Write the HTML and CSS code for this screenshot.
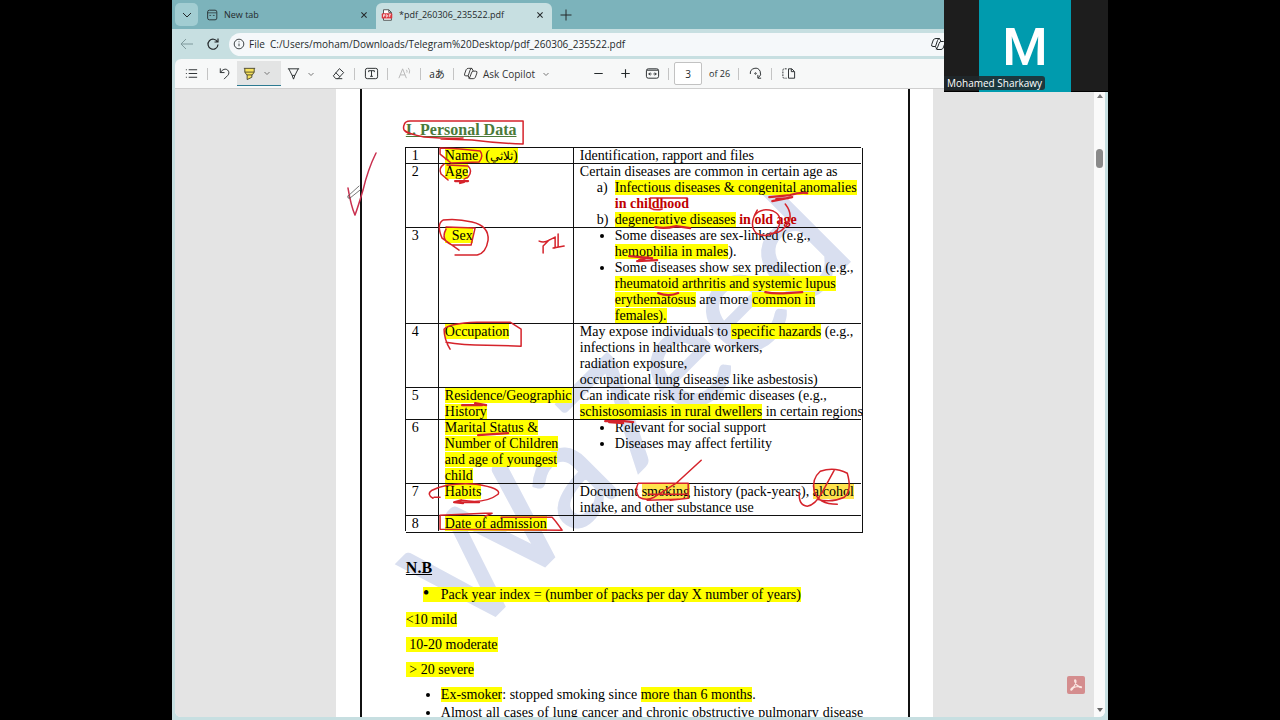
FILE: index.html
```html
<!DOCTYPE html>
<html lang="en">
<head>
<meta charset="utf-8">
<title>pdf_260306_235522.pdf</title>
<link rel="stylesheet" href="styles.css">
</head>
<body>
<div class="browser">
  <header class="tabs">
    <button class="tab-menu" aria-label="Tab actions"><svg class="icon" viewBox="0 0 16 16"><path d="M4 6l4 4 4-4"/></svg></button>
    <div class="tab">
      <svg class="icon tab-icon" viewBox="0 0 16 16"><rect x="3" y="2.500" width="10.500" height="11" rx="2"/><path d="M3 5.500h10M5 8.500h2M9 8.500h2" stroke-width=".8"/></svg>
      <span class="tab-title">New tab</span>
      <button class="close" aria-label="Close New tab"><svg class="icon strong" viewBox="0 0 16 16"><path d="M5 5l6 6M11 5l-6 6"/></svg></button>
    </div>
    <div class="tab active">
      <svg class="tab-icon" viewBox="0 0 16 16"><path d="M4 2h6l3 3v9H4z" fill="#fff" stroke="#444"/><path d="M10 2v3h3" fill="none" stroke="#444"/><rect x="2" y="6" width="12" height="6" rx="1" fill="#d9363e"/><path d="M4 10.500v-3h1.500v1.500H4M7.200 7.500v3c2 0 2-3 0-3M10.600 10.500v-3h2M10.600 9h1.500" fill="none" stroke="#fff" stroke-width=".8"/></svg>
      <span class="tab-title">*pdf_260306_235522.pdf</span>
      <button class="close" aria-label="Close PDF tab"><svg class="icon strong" viewBox="0 0 16 16"><path d="M5 5l6 6M11 5l-6 6"/></svg></button>
    </div>
    <button class="new-tab" aria-label="New tab"><svg class="icon" viewBox="0 0 16 16"><path d="M8 2.500v11M2.500 8h11"/></svg></button>
  </header>

  <div class="address-row">
    <button class="nav dim" aria-label="Back"><svg class="icon" viewBox="0 0 16 16"><path d="M14 8H2M7 3L2 8l5 5"/></svg></button>
    <button class="nav" aria-label="Refresh"><svg class="icon strong" viewBox="0 0 16 16"><path d="M12.500 6A5 5 0 1 0 13 8.500M13 2.500V6H9.500"/></svg></button>
    <div class="address">
      <svg class="icon info" viewBox="0 0 16 16"><circle cx="8" cy="8" r="5.500"/><path d="M8 7.500v3M8 5v1"/></svg>
      <label for="url">File</label>
      <input id="url" class="url" type="text" value="C:/Users/moham/Downloads/Telegram%20Desktop/pdf_260306_235522.pdf">
      <button class="page-copilot" aria-label="Copilot"><svg class="icon" viewBox="0 0 16 16"><path d="M6 2.500h3.500l1.500 3h2.500q2 0 1.300 2l-1.600 4.500q-.7 1.500-2.200 1.500H7l-1.500-3H3q-2 0-1.300-2L3.300 4Q4 2.500 6 2.500zM9.500 2.500q-1.500.2-2 2L5.500 10.500M11 5.500Q9.500 5.500 9 7.500l-1.500 4Q7 13.500 5.800 13"/></svg></button>
    </div>
  </div>

  <main class="viewer">
    <div class="toolbar">
      <button class="tool" aria-label="Contents"><svg class="icon" viewBox="0 0 16 16"><path d="M5 4h9M5 8h9M5 12h9M2 4h1M2 8h1M2 12h1"/></svg></button>
      <span class="sep"></span>
      <button class="tool" aria-label="Undo"><svg class="icon" viewBox="0 0 16 16"><path d="M3.500 2.500V7H8M3.500 7C6 3.500 9 2.500 11.200 4.200c2 1.700 1.800 4.300.3 5.800L7.500 14"/></svg></button>
      <span class="marker-group">
        <button class="tool" aria-label="Highlight"><svg class="icon" viewBox="0 0 16 16"><path d="M3 2.500V7l2 2.500h6L13 7V2.500" fill="#f8e35c" stroke="none"/><path d="M5.500 9.500v5l5-2.500V9.500" fill="#f8e35c" stroke="#4d4a30"/><path d="M2 2.500h12M3 2.500V6.500l2 3h6l2-3V2.500M3 6.500h10" stroke="#4d4a30"/></svg></button>
        <button class="chevron" aria-label="Highlight colors"><svg class="icon" viewBox="0 0 8 8"><path d="M1.500 3L4 5.500 6.500 3"/></svg></button>
      </span>
      <button class="tool" aria-label="Draw"><svg class="icon" viewBox="0 0 16 16"><path d="M2 3h12M3 3l3.500 7h3L13 3M6.500 10L8 14l1.500-4"/></svg></button>
      <button class="chevron" aria-label="Draw options"><svg class="icon" viewBox="0 0 8 8"><path d="M1.500 3L4 5.500 6.500 3"/></svg></button>
      <button class="tool eraser" aria-label="Erase"><svg class="icon" viewBox="0 0 16 16"><path d="M9 2.800l4.500 4.200-6 6.500H5L2.500 10.500zM5 7l4.500 4.500M7 13.500h5"/></svg></button>
      <span class="sep"></span>
      <button class="tool" aria-label="Add text"><svg class="icon" viewBox="0 0 16 16"><rect x="1.500" y="2.500" width="13" height="11" rx="2"/><path d="M5 6.500v-1.500h6v1.500M8 5v6M6.500 11h3"/></svg></button>
      <span class="sep"></span>
      <button class="tool faint" aria-label="Read aloud"><svg class="icon" viewBox="0 0 16 16"><path d="M2 13L6 3l4 10M3.500 9.500h5M10 4q1.300 1.500.5 3M12 2q2.500 3 1 6"/></svg></button>
      <span class="sep"></span>
      <button class="tool translate" aria-label="Translate">aあ</button>
      <span class="sep"></span>
      <button class="ask"><svg class="icon" viewBox="0 0 16 16"><path d="M6 2.500h3.500l1.500 3h2.500q2 0 1.300 2l-1.600 4.500q-.7 1.500-2.200 1.500H7l-1.500-3H3q-2 0-1.300-2L3.300 4Q4 2.500 6 2.500zM9.500 2.500q-1.500.2-2 2L5.500 10.500M11 5.500Q9.500 5.500 9 7.500l-1.500 4Q7 13.500 5.800 13"/></svg><span>Ask Copilot</span><svg class="icon small" viewBox="0 0 8 8"><path d="M1.500 3L4 5.500 6.500 3"/></svg></button>
      <div class="zoom-tools">
        <button class="tool" aria-label="Zoom out"><svg class="icon strong" viewBox="0 0 16 16"><path d="M3.500 8h9"/></svg></button>
        <button class="tool" aria-label="Zoom in"><svg class="icon strong" viewBox="0 0 16 16"><path d="M3.500 8h9M8 3.500v9"/></svg></button>
        <button class="tool" aria-label="Fit to width"><svg class="icon" viewBox="0 0 16 16"><rect x="1.500" y="3" width="13" height="10" rx="2"/><path d="M2 4.500h12M4 8.500h3M9 8.500h3M5.500 7L4 8.500 5.500 10M10.500 7L12 8.500 10.500 10"/></svg></button>
      </div>
      <span class="sep"></span>
      <input id="page-number" class="page-number" type="text" value="3">
      <label class="page-count" for="page-number">of 26</label>
      <span class="sep"></span>
      <button class="tool" aria-label="Rotate"><svg class="icon" viewBox="0 0 16 16"><path d="M2.500 8.500A5.500 5.500 0 1 1 11 12.500M14 13h-3.500V9.500"/><circle cx="8" cy="8" r=".8"/></svg></button>
      <span class="sep"></span>
      <button class="tool" aria-label="Page view"><svg class="icon" viewBox="0 0 16 16"><path d="M8 3h3.500L14.500 6V13H8zM11 3v3h3"/><path d="M6 3H3.500Q2 3 2 4.500v7Q2 13 3.500 13h2.500" stroke-dasharray="2 1"/></svg></button>
    </div>

    <div class="document">
      <div class="canvas">
        <article class="page">
          <div class="watermark" aria-hidden="true">Wa7eed</div>
          <div class="sheet">
            <h1 class="title">I. Personal Data</h1>
            <table class="history">
              <colgroup><col class="col-no"><col class="col-item"><col></colgroup>
              <tbody>
              <tr><td>1</td><td><mark>Name&nbsp; (<bdi lang="ar">ثلاثي</bdi>)</mark></td><td>Identification, rapport and files</td></tr>
              <tr><td>2</td><td><mark>Age</mark></td><td>Certain diseases are common in certain age as
                <ol class="points letters">
                  <li><mark>Infectious diseases &amp; congenital anomalies</mark><br><b>in childhood</b></li>
                  <li><mark>degenerative diseases</mark> <b>in old age</b></li>
                </ol></td></tr>
              <tr><td>3</td><td><mark>&nbsp; Sex</mark></td><td>
                <ul class="points">
                  <li>Some diseases are sex-linked (e.g.,<br><mark>hemophilia in males</mark>).</li>
                  <li>Some diseases show sex predilection (e.g.,<br><mark>rheumatoid arthritis and systemic lupus</mark><br><mark>erythematosus</mark> are more <mark>common in</mark><br><mark>females).</mark></li>
                </ul></td></tr>
              <tr><td>4</td><td><mark>Occupation</mark></td><td>May expose individuals to <mark>specific hazards</mark> (e.g.,<br>infections in healthcare workers,<br>radiation exposure,<br>occupational lung diseases like asbestosis)</td></tr>
              <tr><td>5</td><td><mark>Residence/Geographic<br>History</mark></td><td>Can indicate risk for endemic diseases (e.g.,<br><mark>schistosomiasis in rural dwellers</mark> in certain regions</td></tr>
              <tr><td>6</td><td><mark>Marital Status &amp;<br>Number of Children<br>and age of youngest<br>child</mark></td><td>
                <ul class="points">
                  <li>Relevant for social support</li>
                  <li>Diseases may affect fertility</li>
                </ul></td></tr>
              <tr><td>7</td><td><mark>Habits</mark></td><td>Document <mark class="amber">smoking</mark> history (pack-years), <mark class="amber">alcohol</mark><br>intake, and other substance use</td></tr>
              <tr><td>8</td><td><mark>Date of admission</mark></td><td></td></tr>
              </tbody>
            </table>
            <h2 class="note">N.B</h2>
            <ul class="notes"><li class="plain"><mark class="with-bullet">Pack year index = (number of packs per day X number of years)</mark></li></ul>
            <p><mark>&lt;10 mild</mark></p>
            <p><mark>&nbsp;10-20 moderate</mark></p>
            <p><mark>&nbsp;&gt; 20 severe</mark></p>
            <ul class="notes">
              <li><mark>Ex-smoker</mark>: stopped smoking since <mark>more than 6 months</mark>.</li>
              <li class="full-line">Almost all cases of lung cancer and chronic obstructive pulmonary disease</li>
            </ul>
          </div>
          <svg class="ink" viewBox="336 89 597 628" aria-hidden="true">
            <path d="M408 133Q402 131 404 125Q405 121 410 121L523 121V144Q495 143 472 140L441 139M404 130Q408 134 424 137Q450 139 463 138"/>
            <path d="M440 148Q445 148 460 149L480 151Q484 156 479 162L451 163Q444 157 440 154Z"/>
            <path d="M444 164Q438 168 441 174L448 180M447 165L468 166Q473 171 468 177L464 179"/>
            <path class="thick" d="M455 181H468M460 183L464 182"/>
            <path d="M459 250L442 238Q436 224 443 220Q456 218 472 222Q489 226 488 240Q486 253 477 255H455M446 227L475 228L471 245H452Q440 240 446 229"/>
            <path d="M539 241Q544 243 549 240L555 237M549 240L543 246V253M555 237V248M553 248L564 246M558 247V234"/>
            <path class="rose" d="M376 153Q368 169 363 190Q358 207 355 215Q351 206 348 188"/>
            <path class="pencil" d="M348 196L359 186M350 198L360 190M348 196V198H350"/>
            <path class="thick" d="M769 197L790 195Q799 192 807 193M772 201L792 197M776 199L788 198"/>
            <path d="M650 198H687M650 198V207M650 208Q656 211 662 209"/>
            <path class="thick" d="M655 227Q665 229 676 226L690 228"/>
            <path d="M757 210Q748 225 756 233Q768 239 777 230Q784 216 773 211Q760 207 754 216M785 204Q792 213 789 221Q781 235 770 233"/>
            <path class="thick" d="M629 256L652 258M637 261L657 260M639 260L648 257M658 293Q669 297 678 293M765 292Q774 294 787 293L802 292"/>
            <path d="M450 349Q444 339 444 329Q449 323 477 322H510L521 329V346L487 345Q462 345 446 342"/>
            <path class="thick" d="M462 405L482 405M475 403L486 405M478 435L508 433M605 421H624L633 422M609 422L623 423"/>
            <path d="M433 498Q426 494 432 490Q449 482 476 484Q502 488 498 494Q485 504 462 500M440 497L434 497"/>
            <path class="thick" d="M454 502H479M454 502L461 500M454 502L463 503"/>
            <path d="M440 515L485 513H492L485 516M501 517H552Q555 520 562 530L440 529V515"/>
            <path d="M638 483Q634 491 639 497Q646 501 654 497L676 483L701 460M638 483H688V498L670 500M647 500L678 499M648 494L686 494"/>
            <path d="M799 492Q798 505 807 506Q815 505 822 492L834 470M837 504Q818 504 814 491Q811 479 820 471Q834 466 847 473Q852 490 844 497Q831 503 817 499"/>
          </svg>
        </article>
        <button class="acrobat" aria-label="Open in Acrobat"><svg viewBox="0 0 18 18"><path d="M4 14q-1-1 3-3.500Q10 5.500 8.500 4q-1.200-.5-.7 1.700Q8.700 9 12.500 11.300q2.500 1 1.800-.5Q11 9.500 6.300 11.800 4.500 14.500 4 14z" fill="none" stroke="#fbe6e2" stroke-width="1.200"/></svg></button>
      </div>
      <div class="scrollbar"><i class="arrow up"></i><i class="thumb"></i><i class="arrow down"></i></div>
    </div>
  </main>

  <aside class="participant">
    <div class="avatar">M</div>
    <span class="participant-name">Mohamed Sharkawy</span>
  </aside>
</div>
</body>
</html>
```
FILE: styles.css
```css
* { box-sizing: border-box; }

body {
  margin: 0;
  padding: 0 172px;
  height: 100vh;
  background: #000;
  overflow: hidden;
}

button, input { font: inherit; color: inherit; margin: 0; padding: 0; border: 0; background: none; }
button { display: flex; align-items: center; justify-content: center; flex: none; }

.icon { width: 16px; height: 16px; fill: none; stroke: currentColor; stroke-width: 1; flex: none; }
.icon.strong { stroke-width: 1.2; }

.browser {
  position: relative;
  display: flex;
  flex-direction: column;
  height: 100%;
  padding-bottom: 3px;
  background: #c7dfe1;
  color: #24292b;
  font: 10px/14px "Open Sans", "Noto Sans", sans-serif;
  overflow: hidden;
}

/* Tabs */
.tabs { display: flex; align-items: stretch; height: 29px; padding: 3px 0 0 3px; background: #7cb3bb; flex: none; }
.tab-menu { width: 23px; height: 23px; border-radius: 5px; background: #a2cdd2; }
.tab-menu .icon { width: 16px; height: 16px; }
.tab { display: flex; align-items: center; width: 178px; padding: 0 4px 2px 7px; font-size: 9px; }
.tab-icon { width: 14px; height: 14px; margin-right: 5px; flex: none; }
.tab-title { flex: 1; white-space: nowrap; }
.tab.active { width: 176px; padding-left: 4px; border-radius: 6px 6px 0 0; background: #c7dfe1; }
.close { width: 16px; height: 16px; }
.close .icon { width: 14px; height: 14px; }
.new-tab { width: 28px; height: 23px; }
.new-tab .icon { width: 16px; height: 16px; }

/* Address */
.address-row { display: flex; align-items: center; height: 30px; padding-left: 4px; flex: none; }
.nav { width: 22px; margin-right: 4px; }
.nav .icon { width: 16px; height: 16px; }
.dim { color: #7f999c; }
.address { display: flex; flex: 1; align-items: center; height: 23px; margin-left: 1px; padding-left: 3px; border-radius: 12px 0 0 12px; background: #f5f8fa; }
.info { width: 14px; height: 14px; margin-right: 3px; }
.address label { width: 21px; }
.url { flex: 1; height: 20px; }
.page-copilot { width: 16px; margin-right: 162px; }

/* PDF toolbar */
.viewer { display: flex; flex-direction: column; flex: 1; min-height: 0; margin: 0 3px; border-radius: 6px; background: #f7f8f8; overflow: hidden; }
.toolbar { display: flex; align-items: center; height: 30px; padding-left: 5px; border-bottom: 1px solid #cfcfcf; flex: none; }
.tool { width: 22px; height: 24px; }
.tool .icon, .ask .icon { width: 15px; height: 15px; }
.chevron { width: 14px; height: 24px; color: #777; }
.chevron .icon, .ask .icon.small { width: 8px; height: 8px; }
.sep { width: 1px; height: 12px; margin: 0 5px; background: #c4c4c4; flex: none; }
.marker-group { display: flex; width: 44px; height: 25px; margin: 0 1px 0 2px; padding-left: 1px; background: #e3e4e4; border-bottom: 1px solid #2d7a91; }
.eraser { margin-left: 9px; }
.faint { color: #b5b5b5; }
.translate { font: 10px/14px "Open Sans", "Noto Sans CJK JP", sans-serif; }
.ask { gap: 5px; padding-left: 4px; color: #333; }
.ask .small { margin-left: 2px; color: #777; }
.zoom-tools { display: flex; gap: 5px; margin-left: 37px; }
.page-number { width: 28px; height: 23px; border: 1px solid #c2c2c2; border-radius: 2px; background: #fff; text-align: center; }
.page-count { width: 24px; margin-left: 7px; font-size: 9px; white-space: nowrap; }

/* Document */
.document { display: flex; flex: 1; min-height: 0; }
.canvas { position: relative; display: flex; justify-content: center; flex: 1; background: #e4e4e4; overflow: hidden; }
.scrollbar { display: flex; flex-direction: column; align-items: center; width: 11px; padding: 5px 0; background: #fafafa; }
.arrow { border: 3px solid transparent; }
.arrow.up { border-top: 0; border-bottom: 4px solid #777; }
.arrow.down { border-bottom: 0; border-top: 4px solid #666; margin-top: auto; }
.thumb { width: 7px; height: 19px; margin-top: 51px; border-radius: 4px; background: #8a8a8a; }
.acrobat { position: absolute; right: 9px; bottom: 23px; width: 18px; height: 18px; border-radius: 2px; background: #d48d8e; }
.acrobat svg { width: 18px; height: 18px; }

.page { position: relative; width: 65%; padding: 0 23px 0 24px; background: #fff; color: #000; font: 14px/16px "Liberation Serif", "Times New Roman", serif; }
.sheet { position: relative; min-height: 100%; padding: 32px 45px 0 44px; border: solid #111; border-width: 0 2px; }
.watermark { position: absolute; left: 50%; top: 50%; transform: translate(-50%, -50%) translate(-12px, 4px) rotate(-45deg); color: #d9dff0; font: 149px/1 Lato, sans-serif; -webkit-text-stroke: 2px #d9dff0; }
.ink { position: absolute; left: 0; top: 0; width: 100%; fill: none; stroke: #d5232b; stroke-width: 1.5; stroke-linecap: round; stroke-linejoin: round; }
.ink .thick { stroke-width: 2.200; }
.ink .rose { stroke: #c9304f; }
.ink .pencil { stroke: #555; stroke-width: .8; }

mark { background: #ff0; color: inherit; }
mark.amber { background: #ffe34d; }

.title { margin: 0 0 9px; color: #4b7a3a; font-size: 16px; line-height: 18px; text-decoration: underline; }
.history { width: 100%; table-layout: fixed; border-collapse: separate; border-spacing: 0; border: solid #111; border-width: 0 1px 1px 0; }
.history td { padding: 0 0 0 6px; vertical-align: top; white-space: nowrap; box-shadow: -1px -1px 0 #111; }
.history tr { height: 16px; }
.history bdi { font-size: 12px; line-height: 1px; }
.col-no { width: 33px; }
.col-item { width: 135px; }
.history b { color: #c00000; }
.points { margin: 0; padding-left: 35px; }
.points li { padding-left: 0; }
.letters { list-style: none; counter-reset: letter; }
.letters li { position: relative; counter-increment: letter; }
.letters li::before { content: counter(letter, lower-alpha) ")"; position: absolute; left: -18px; }

.note { margin: 26px 0 10px; font-size: 16px; line-height: 18px; text-decoration: underline; }
.sheet p { margin: 9px 0; }
.notes { margin: 0; padding-left: 35px; }
.notes li { margin-bottom: 2px; white-space: nowrap; }
.notes .full-line { text-align-last: justify; }
.notes .plain { list-style: none; }
.with-bullet { margin-left: -18px; }
.with-bullet::before { content: "•"; display: inline-block; width: 18px; font-size: 19px; line-height: 1px; }

/* Call participant tile */
.participant { position: absolute; right: 0; top: 0; width: 164px; height: 92px; background: #1d1d1d; border-bottom: 1px solid #000; color: #fff; }
.avatar { display: flex; align-items: center; justify-content: center; width: 92px; height: 92px; margin: 0 auto 0 35px; padding-top: 4px; background: #009bae; font: 500 52px/1 Roboto, sans-serif; }
.participant-name { position: absolute; left: 0; bottom: 1px; padding: 0 3px; border-radius: 0 3px 3px 0; background: #20282bd9; font-size: 10px; line-height: 14px; white-space: nowrap; }
```
